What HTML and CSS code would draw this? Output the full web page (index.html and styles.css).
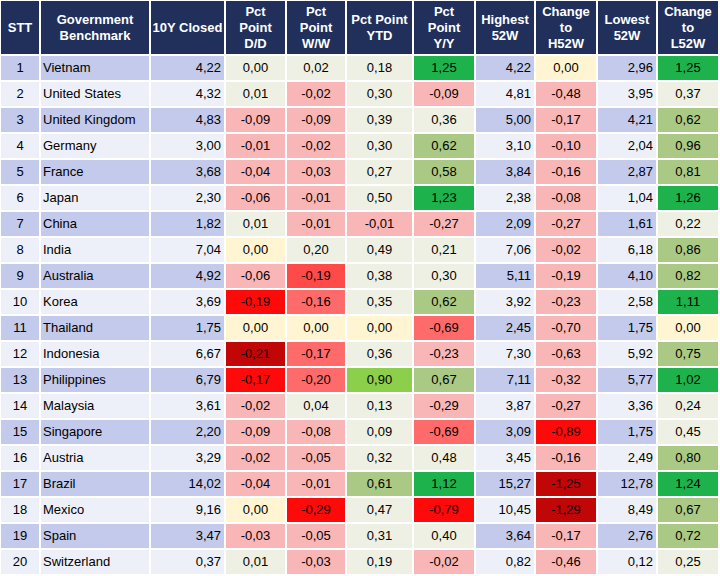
FILE: index.html
```html
<!DOCTYPE html>
<html>
<head>
<meta charset="utf-8">
<link rel="stylesheet" href="styles.css">
</head>
<body>
<div class="tbl">
  <div class="row head">
    <div class="c">STT</div>
    <div class="c">Government<br>Benchmark</div>
    <div class="c">10Y Closed</div>
    <div class="c">Pct<br>Point<br>D/D</div>
    <div class="c">Pct<br>Point<br>W/W</div>
    <div class="c">Pct Point<br>YTD</div>
    <div class="c">Pct<br>Point<br>Y/Y</div>
    <div class="c">Highest<br>52W</div>
    <div class="c">Change<br>to<br>H52W</div>
    <div class="c">Lowest<br>52W</div>
    <div class="c">Change<br>to<br>L52W</div>
  </div>

  <div class="row odd"><div class="c stt">1</div><div class="c name">Vietnam</div><div class="c num">4,22</div><div class="c n">0,00</div><div class="c n">0,02</div><div class="c n">0,18</div><div class="c gb">1,25</div><div class="c num">4,22</div><div class="c y">0,00</div><div class="c num">2,96</div><div class="c gb">1,25</div></div>
  <div class="row even"><div class="c stt">2</div><div class="c name">United States</div><div class="c num">4,32</div><div class="c n">0,01</div><div class="c lr">-0,02</div><div class="c n">0,30</div><div class="c lr">-0,09</div><div class="c num">4,81</div><div class="c lr">-0,48</div><div class="c num">3,95</div><div class="c n">0,37</div></div>
  <div class="row odd"><div class="c stt">3</div><div class="c name">United Kingdom</div><div class="c num">4,83</div><div class="c lr">-0,09</div><div class="c lr">-0,09</div><div class="c n">0,39</div><div class="c n">0,36</div><div class="c num">5,00</div><div class="c lr">-0,17</div><div class="c num">4,21</div><div class="c go">0,62</div></div>
  <div class="row even"><div class="c stt">4</div><div class="c name">Germany</div><div class="c num">3,00</div><div class="c lr">-0,01</div><div class="c lr">-0,02</div><div class="c n">0,30</div><div class="c go">0,62</div><div class="c num">3,10</div><div class="c lr">-0,10</div><div class="c num">2,04</div><div class="c go">0,96</div></div>
  <div class="row odd"><div class="c stt">5</div><div class="c name">France</div><div class="c num">3,68</div><div class="c lr">-0,04</div><div class="c lr">-0,03</div><div class="c n">0,27</div><div class="c go">0,58</div><div class="c num">3,84</div><div class="c lr">-0,16</div><div class="c num">2,87</div><div class="c go">0,81</div></div>
  <div class="row even"><div class="c stt">6</div><div class="c name">Japan</div><div class="c num">2,30</div><div class="c lr">-0,06</div><div class="c lr">-0,01</div><div class="c n">0,50</div><div class="c gb">1,23</div><div class="c num">2,38</div><div class="c lr">-0,08</div><div class="c num">1,04</div><div class="c gb">1,26</div></div>
  <div class="row odd"><div class="c stt">7</div><div class="c name">China</div><div class="c num">1,82</div><div class="c n">0,01</div><div class="c lr">-0,01</div><div class="c lr">-0,01</div><div class="c lr">-0,27</div><div class="c num">2,09</div><div class="c lr">-0,27</div><div class="c num">1,61</div><div class="c n">0,22</div></div>
  <div class="row even"><div class="c stt">8</div><div class="c name">India</div><div class="c num">7,04</div><div class="c y">0,00</div><div class="c n">0,20</div><div class="c n">0,49</div><div class="c n">0,21</div><div class="c num">7,06</div><div class="c lr">-0,02</div><div class="c num">6,18</div><div class="c go">0,86</div></div>
  <div class="row odd"><div class="c stt">9</div><div class="c name">Australia</div><div class="c num">4,92</div><div class="c lr">-0,06</div><div class="c mr2">-0,19</div><div class="c n">0,38</div><div class="c n">0,30</div><div class="c num">5,11</div><div class="c lr">-0,19</div><div class="c num">4,10</div><div class="c go">0,82</div></div>
  <div class="row even"><div class="c stt">10</div><div class="c name">Korea</div><div class="c num">3,69</div><div class="c br">-0,19</div><div class="c mr">-0,16</div><div class="c n">0,35</div><div class="c go">0,62</div><div class="c num">3,92</div><div class="c lr">-0,23</div><div class="c num">2,58</div><div class="c gb">1,11</div></div>
  <div class="row odd"><div class="c stt">11</div><div class="c name">Thailand</div><div class="c num">1,75</div><div class="c y">0,00</div><div class="c y">0,00</div><div class="c y">0,00</div><div class="c mr">-0,69</div><div class="c num">2,45</div><div class="c lr">-0,70</div><div class="c num">1,75</div><div class="c y">0,00</div></div>
  <div class="row even"><div class="c stt">12</div><div class="c name">Indonesia</div><div class="c num">6,67</div><div class="c dr">-0,21</div><div class="c mr">-0,17</div><div class="c n">0,36</div><div class="c lr">-0,23</div><div class="c num">7,30</div><div class="c lr">-0,63</div><div class="c num">5,92</div><div class="c go">0,75</div></div>
  <div class="row odd"><div class="c stt">13</div><div class="c name">Philippines</div><div class="c num">6,79</div><div class="c br">-0,17</div><div class="c mr">-0,20</div><div class="c gm">0,90</div><div class="c go">0,67</div><div class="c num">7,11</div><div class="c lr">-0,32</div><div class="c num">5,77</div><div class="c gb">1,02</div></div>
  <div class="row even"><div class="c stt">14</div><div class="c name">Malaysia</div><div class="c num">3,61</div><div class="c lr">-0,02</div><div class="c n">0,04</div><div class="c n">0,13</div><div class="c lr">-0,29</div><div class="c num">3,87</div><div class="c lr">-0,27</div><div class="c num">3,36</div><div class="c n">0,24</div></div>
  <div class="row odd"><div class="c stt">15</div><div class="c name">Singapore</div><div class="c num">2,20</div><div class="c lr">-0,09</div><div class="c lr">-0,08</div><div class="c n">0,09</div><div class="c mr">-0,69</div><div class="c num">3,09</div><div class="c br">-0,89</div><div class="c num">1,75</div><div class="c n">0,45</div></div>
  <div class="row even"><div class="c stt">16</div><div class="c name">Austria</div><div class="c num">3,29</div><div class="c lr">-0,02</div><div class="c lr">-0,05</div><div class="c n">0,32</div><div class="c n">0,48</div><div class="c num">3,45</div><div class="c lr">-0,16</div><div class="c num">2,49</div><div class="c go">0,80</div></div>
  <div class="row odd"><div class="c stt">17</div><div class="c name">Brazil</div><div class="c num">14,02</div><div class="c lr">-0,04</div><div class="c lr">-0,01</div><div class="c go">0,61</div><div class="c gb">1,12</div><div class="c num">15,27</div><div class="c dr">-1,25</div><div class="c num">12,78</div><div class="c gb">1,24</div></div>
  <div class="row even"><div class="c stt">18</div><div class="c name">Mexico</div><div class="c num">9,16</div><div class="c y">0,00</div><div class="c br">-0,29</div><div class="c n">0,47</div><div class="c br">-0,79</div><div class="c num">10,45</div><div class="c dr">-1,29</div><div class="c num">8,49</div><div class="c go">0,67</div></div>
  <div class="row odd"><div class="c stt">19</div><div class="c name">Spain</div><div class="c num">3,47</div><div class="c lr">-0,03</div><div class="c lr">-0,05</div><div class="c n">0,31</div><div class="c n">0,40</div><div class="c num">3,64</div><div class="c lr">-0,17</div><div class="c num">2,76</div><div class="c go">0,72</div></div>
  <div class="row even"><div class="c stt">20</div><div class="c name">Switzerland</div><div class="c num">0,37</div><div class="c n">0,01</div><div class="c lr">-0,03</div><div class="c n">0,19</div><div class="c lr">-0,02</div><div class="c num">0,82</div><div class="c lr">-0,46</div><div class="c num">0,12</div><div class="c n">0,25</div></div>
</div>
</body>
</html>
```

FILE: styles.css
```css
html, body {
  margin: 0;
  padding: 0;
  background: #ffffff;
}

.tbl {
  display: flex;
  flex-direction: column;
  gap: 2px;
  padding: 1px 0 0 1px;
  width: 717px;
  font-family: "Liberation Sans", Arial, sans-serif;
  font-size: 13px;
  color: #000;
}

.row {
  display: grid;
  grid-template-columns: 38px 108px 73px 59px 58px 65px 60px 58px 60px 58px 60px;
  column-gap: 2px;
  height: 24px;
}

.c {
  line-height: 24px;
  white-space: nowrap;
  overflow: hidden;
  text-align: center;
  background: #edf0e3;
}

.head {
  height: 53px;
}

.head .c {
  background: #20305b;
  color: #ffffff;
  font-weight: bold;
  line-height: 16px;
  display: flex;
  align-items: center;
  justify-content: center;
  text-align: center;
}

.odd .stt, .odd .name, .odd .num { background: #c3caeb; }
.even .stt, .even .name, .even .num { background: #eef0f9; }

.stt { text-align: center; }
.name { text-align: left; padding-left: 2px; }
.num { text-align: right; padding-right: 3px; }

.n  { background: #edf0e3; }
.lr { background: #f8b6b6; }
.mr { background: #ff6a6a; }
.mr2 { background: #ff4a4a; }
.br { background: #ff0a0a; }
.dr { background: #c00606; }
.y  { background: #fff5d2; }
.go { background: #a9c985; }
.gm { background: #8ccf4a; }
.gb { background: #1eb24c; }
```
